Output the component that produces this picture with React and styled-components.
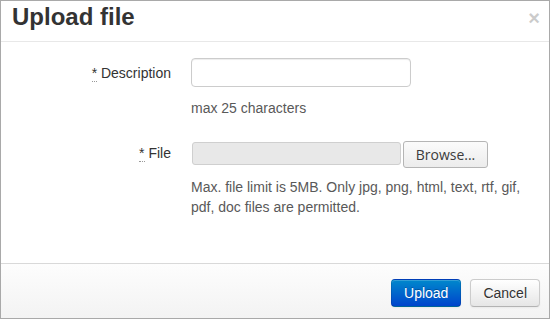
import React from "react";
import styled, { createGlobalStyle } from "styled-components";

const Global = createGlobalStyle`
  html, body { margin: 0; padding: 0; background: #fff; }
  body {
    font-family: "Liberation Sans", Arial, sans-serif;
    font-size: 14px;
    line-height: 20px;
    color: #333;
  }
  * { box-sizing: border-box; }
`;

const Modal = styled.div`
  width: 550px;
  height: 319px;
  border: 1px solid #a9a9a9;
  display: flex;
  flex-direction: column;
  background: #fff;
`;

const Header = styled.div`
  display: flex;
  justify-content: space-between;
  align-items: flex-start;
  padding: 1px 9px 9px 11px;
  border-bottom: 1px solid #e8e8e8;
`;

const Title = styled.h3`
  margin: 0;
  font-size: 24px;
  line-height: 30px;
  font-weight: bold;
  color: #333;
`;

const Close = styled.span`
  font-size: 20px;
  font-weight: bold;
  line-height: 20px;
  color: #000;
  opacity: 0.2;
  margin-top: 6px;
  cursor: pointer;
`;

const Body = styled.div`
  flex: 1;
  padding: 16px 14px 0 10px;
`;

const Row = styled.div`
  display: grid;
  grid-template-columns: 160px 1fr;
  column-gap: 20px;
  margin-bottom: 20px;
`;

const Label = styled.label`
  padding-top: ${(p) => p.$pt || 5}px;
  text-align: right;
  color: #333;
`;

const Req = styled.abbr`
  text-decoration: none;
  border-bottom: 1px dotted #999;
  cursor: help;
`;

const TextInput = styled.input`
  display: block;
  width: 220px;
  height: 29px;
  padding: 4px 6px;
  border: 1px solid #ccc;
  border-radius: 4px;
  font: inherit;
  box-shadow: inset 0 1px 1px rgba(0, 0, 0, 0.075);
  outline: none;
`;

const Help = styled.div`
  margin-top: ${(p) => p.$mt}px;
  color: #595959;
`;

const FileWrap = styled.div`
  display: flex;
  align-items: flex-start;
  margin-top: 3px;
  height: 27px;
`;

const FileField = styled.div`
  width: 209px;
  height: 23px;
  margin: 1px 0 0 1px;
  background: #e8e8e8;
  border: 1px solid #cfcfcf;
  border-radius: 3px;
`;

const BrowseBtn = styled.button`
  margin-left: 2px;
  width: 85px;
  height: 27px;
  padding: 0;
  border: 1px solid #b5b5b5;
  border-radius: 3px;
  background: linear-gradient(#fbfbfb, #ececec);
  font-family: "Open Sans", "DejaVu Sans", sans-serif;
  font-size: 14px;
  color: #3c3c3c;
  line-height: 25px;
`;

const Footer = styled.div`
  display: flex;
  justify-content: flex-end;
  gap: 9px;
  padding: 15px 9px 11px 15px;
  border-top: 1px solid #d9d9d9;
  background: linear-gradient(#fdfdfd, #f3f3f3);
`;

const Btn = styled.button`
  height: 28px;
  padding: 0 12px;
  font-family: "Liberation Sans", Arial, sans-serif;
  font-size: 14px;
  line-height: 26px;
  border-radius: 4px;
  cursor: pointer;
  color: ${(p) => (p.$primary ? "#fff" : "#333")};
  text-shadow: ${(p) =>
    p.$primary ? "0 -1px 0 rgba(0,0,0,0.25)" : "0 1px 1px rgba(255,255,255,0.75)"};
  background: ${(p) =>
    p.$primary
      ? "linear-gradient(#0088cc, #0044cc)"
      : "linear-gradient(#ffffff, #e6e6e6)"};
  border: 1px solid;
  border-color: ${(p) =>
    p.$primary
      ? "rgba(0,0,0,0.1) rgba(0,0,0,0.1) rgba(0,0,0,0.25)"
      : "#cccccc #cccccc #b3b3b3"};
  box-shadow: inset 0 1px 0 rgba(255, 255, 255, 0.2), 0 1px 2px rgba(0, 0, 0, 0.05);
`;

export default function App() {
  return (
    <>
      <Global />
      <Modal>
        <Header>
          <Title>Upload file</Title>
          <Close>×</Close>
        </Header>
        <Body>
          <Row>
            <Label>
              <Req title="required">*</Req> Description
            </Label>
            <div>
              <TextInput type="text" />
              <Help $mt={11}>max 25 characters</Help>
            </div>
          </Row>
          <Row>
            <Label>
              <Req title="required">*</Req> File
            </Label>
            <div>
              <FileWrap>
                <FileField />
                <BrowseBtn type="button">Browse...</BrowseBtn>
              </FileWrap>
              <Help $mt={9}>
                Max. file limit is 5MB. Only jpg, png, html, text, rtf, gif, pdf, doc files
                are permitted.
              </Help>
            </div>
          </Row>
        </Body>
        <Footer>
          <Btn $primary>Upload</Btn>
          <Btn>Cancel</Btn>
        </Footer>
      </Modal>
    </>
  );
}
